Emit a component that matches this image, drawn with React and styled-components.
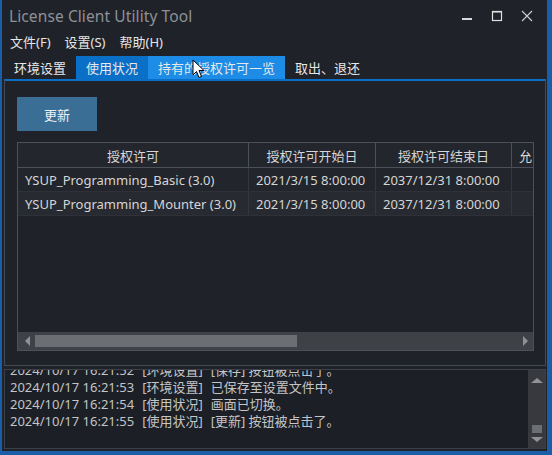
import React from "react";
import styled, { createGlobalStyle } from "styled-components";

const Global = createGlobalStyle`
  html, body { margin: 0; padding: 0; background: #1b5ea8; }
  body { width: 552px; height: 455px; overflow: hidden; }
  * { box-sizing: border-box; }
`;

const FONT = `"Noto Sans", "Noto Sans CJK SC", sans-serif`;

const Window = styled.div`
  position: relative;
  margin-left: 2px;
  width: 545px;
  height: 451px;
  background: #1f2229;
  display: flex;
  flex-direction: column;
  padding: 0 1px 0 2px;
  font-family: ${FONT};
  color: #dcdcdc;
`;

const TitleBar = styled.div`
  height: 32px;
  display: flex;
  align-items: center;
  justify-content: space-between;
  padding: 0 0 0 5px;
`;

const Title = styled.div`
  font-size: 15.5px;
  color: #8d9196;
  letter-spacing: 0.1px;
  margin-top: -1px;
`;

const Controls = styled.div`
  display: flex;
  align-items: center;
  height: 100%;
`;

const CtrlBtn = styled.div`
  width: 30px;
  height: 100%;
  display: flex;
  align-items: center;
  justify-content: center;
  margin-right: ${(p) => p.$mr || 0}px;
`;

const MenuBar = styled.div`
  height: 20px;
  display: flex;
  align-items: center;
  font-size: 13px;
  gap: 14px;
  padding-left: 6px;
  margin-top: -1px;
  color: #e6e6e6;
`;

const TabStrip = styled.div`
  display: flex;
  margin-top: 5px;
  height: 23px;
`;

const Tab = styled.div`
  padding: 0 10px;
  font-size: 13px;
  display: flex;
  align-items: center;
  color: #e8e8e8;
  background: ${(p) => (p.$state === "active" ? "#0a6fc7" : p.$state === "hover" ? "#1c8ce6" : "transparent")};
`;

const TabPanel = styled.div`
  height: 287px;
  border-top: 2px solid #0a6fc7;
  border-left: 1px solid #434a54;
  border-right: 1px solid #434a54;
  border-bottom: 1px solid #434a54;
  padding: 16px 11px 14px 12px;
  display: flex;
  flex-direction: column;
`;

const Button = styled.div`
  width: 80px;
  height: 34px;
  background: #3b6e95;
  color: #eef2f5;
  font-size: 13px;
  display: flex;
  align-items: center;
  justify-content: center;
`;

const Grid = styled.div`
  margin-top: 11px;
  flex: 1;
  border: 1px solid #4c5058;
  display: flex;
  flex-direction: column;
  overflow: hidden;
`;

const Row = styled.div`
  display: grid;
  grid-template-columns: 231px 127px 136px 22px;
  height: ${(p) => (p.$header ? "25px" : "24px")};
  background: ${(p) => (p.$header ? "#23262c" : p.$alt ? "#272a31" : "#22252b")};
  border-bottom: 1px solid ${(p) => (p.$header ? "#4c5058" : "#2e3138")};
  flex-shrink: 0;
`;

const Cell = styled.div`
  display: flex;
  align-items: center;
  justify-content: ${(p) => (p.$center ? "center" : "flex-start")};
  padding: 0 ${(p) => (p.$center ? "0" : "7px")};
  font-size: 13px;
  color: #d6d6d6;
  white-space: nowrap;
  overflow: hidden;
  border-right: 1px solid ${(p) => (p.$header ? "#4c5058" : "#34373e")};
  &:last-child { border-right: none; }
`;

const Filler = styled.div`
  flex: 1;
`;

const HScroll = styled.div`
  height: 18px;
  background: #3e4146;
  display: flex;
  align-items: center;
  flex-shrink: 0;
  padding: 0 5px 0 7px;
`;

const Thumb = styled.div`
  height: 12px;
  margin-left: 5px;
  background: #6b6e73;
`;

const Arrow = styled.div`
  width: 0;
  height: 0;
  border-top: 5px solid transparent;
  border-bottom: 5px solid transparent;
  ${(p) => (p.$dir === "left" ? "border-right: 5px solid #8e9196;" : "border-left: 5px solid #8e9196;")}
`;

const LogBox = styled.div`
  margin-top: 3px;
  height: 80px;
  border: 1px solid #3c4048;
  background: #1c1f25;
  display: flex;
  overflow: hidden;
`;

const LogText = styled.div`
  flex: 1;
  overflow: hidden;
  padding-left: 5px;
`;

const LogInner = styled.div`
  margin-top: -8px;
`;

const LogLine = styled.div`
  display: flex;
  gap: 8px;
  font-size: 13px;
  line-height: 17px;
  color: #c3c5c8;
  white-space: nowrap;
`;

const VScroll = styled.div`
  width: 17px;
  background: #37393e;
  display: flex;
  flex-direction: column;
  align-items: center;
  padding: 8px 0 6px;
`;

const VArrow = styled.div`
  width: 0;
  height: 0;
  border-left: 6px solid transparent;
  border-right: 6px solid transparent;
  ${(p) => (p.$dir === "up" ? "border-bottom: 5px solid #8e9196;" : "border-top: 5px solid #8e9196;")}
`;

const VThumb = styled.div`
  width: 10px;
  height: 8px;
  background: #6b6e73;
  margin-top: auto;
  margin-bottom: 4px;
`;

const Cursor = styled.svg`
  position: absolute;
  left: 190px;
  top: 59px;
`;

const rows = [
  ["YSUP_Programming_Basic (3.0)", "2021/3/15 8:00:00", "2037/12/31 8:00:00"],
  ["YSUP_Programming_Mounter (3.0)", "2021/3/15 8:00:00", "2037/12/31 8:00:00"],
];

const logs = [
  ["2024/10/17 16:21:52", "[环境设置]", "[保存] 按钮被点击了。"],
  ["2024/10/17 16:21:53", "[环境设置]", "已保存至设置文件中。"],
  ["2024/10/17 16:21:54", "[使用状况]", "画面已切换。"],
  ["2024/10/17 16:21:55", "[使用状况]", "[更新] 按钮被点击了。"],
];

export default function App() {
  return (
    <>
      <Global />
      <Window>
        <TitleBar>
          <Title>License Client Utility Tool</Title>
          <Controls>
            <CtrlBtn>
              <svg width="12" height="12" viewBox="0 0 12 12">
                <rect x="1" y="8" width="10" height="2" fill="#d8d8d8" />
              </svg>
            </CtrlBtn>
            <CtrlBtn>
              <svg width="12" height="12" viewBox="0 0 12 12">
                <rect x="1.5" y="1.5" width="9" height="9" fill="none" stroke="#e0e0e0" strokeWidth="1.2" />
                <rect x="1.5" y="1.5" width="9" height="1" fill="#e0e0e0" />
              </svg>
            </CtrlBtn>
            <CtrlBtn $mr={4}>
              <svg width="12" height="12" viewBox="0 0 12 12">
                <path d="M1 1 L11 11 M11 1 L1 11" stroke="#cfcfcf" strokeWidth="1.1" />
              </svg>
            </CtrlBtn>
          </Controls>
        </TitleBar>
        <MenuBar>
          <span>文件(F)</span>
          <span>设置(S)</span>
          <span>帮助(H)</span>
        </MenuBar>
        <TabStrip>
          <Tab>环境设置</Tab>
          <Tab $state="active">使用状况</Tab>
          <Tab $state="hover">持有的授权许可一览</Tab>
          <Tab>取出、退还</Tab>
        </TabStrip>
        <TabPanel>
          <Button>更新</Button>
          <Grid>
            <Row $header>
              <Cell $header $center>授权许可</Cell>
              <Cell $header $center>授权许可开始日</Cell>
              <Cell $header $center>授权许可结束日</Cell>
              <Cell $header>允</Cell>
            </Row>
            {rows.map((r, i) => (
              <Row key={i} $alt={i % 2 === 1}>
                <Cell>{r[0]}</Cell>
                <Cell>{r[1]}</Cell>
                <Cell>{r[2]}</Cell>
                <Cell />
              </Row>
            ))}
            <Filler />
            <HScroll>
              <Arrow $dir="left" />
              <Thumb style={{ width: 262 }} />
              <Filler />
              <Arrow $dir="right" />
            </HScroll>
          </Grid>
        </TabPanel>
        <LogBox>
          <LogText>
            <LogInner>
              {logs.map((l, i) => (
                <LogLine key={i}>
                  <span>{l[0]}</span>
                  <span>{l[1]}</span>
                  <span>{l[2]}</span>
                </LogLine>
              ))}
            </LogInner>
          </LogText>
          <VScroll>
            <VArrow $dir="up" />
            <VThumb />
            <VArrow $dir="down" />
          </VScroll>
        </LogBox>
        <Cursor width="13" height="20" viewBox="0 0 13 20">
          <path d="M1 1 L1 16 L4.5 12.5 L7 18.5 L9.5 17.5 L7 11.5 L12 11.5 Z" fill="#ffffff" stroke="#000" strokeWidth="1" strokeLinejoin="round" />
        </Cursor>
      </Window>
    </>
  );
}
